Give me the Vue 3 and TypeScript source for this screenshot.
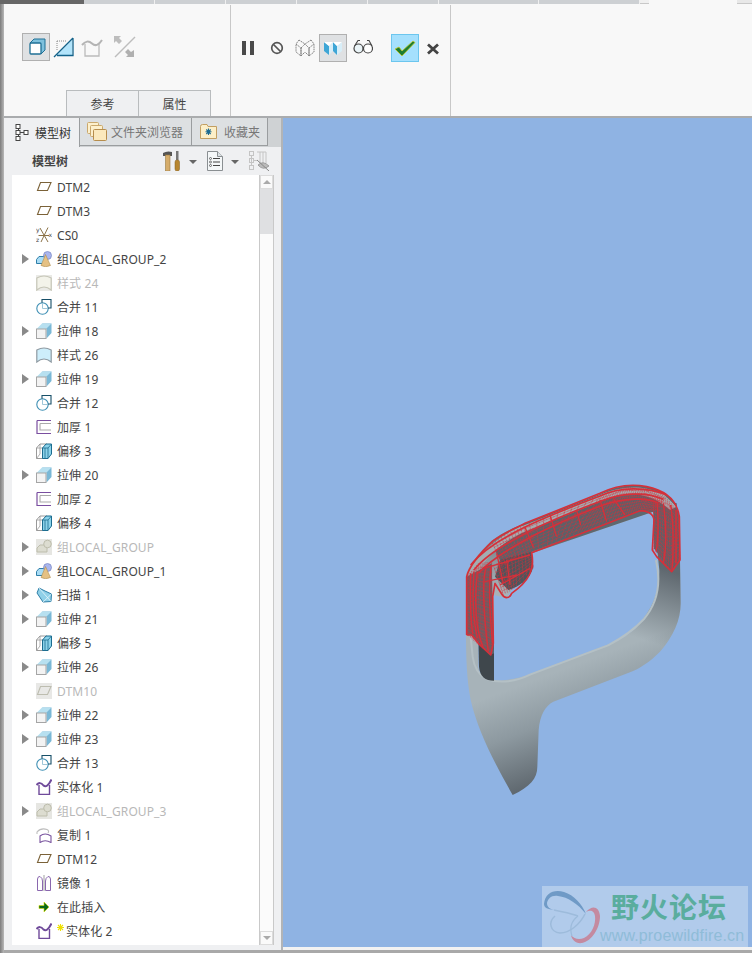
<script setup lang="ts">
interface Row { label: string; icon: string; arrow?: boolean; muted?: boolean; star?: boolean }
const rows: Row[] = [
  { label: 'DTM2', icon: 'plane' },
  { label: 'DTM3', icon: 'plane' },
  { label: 'CS0', icon: 'csys' },
  { label: '组LOCAL_GROUP_2', icon: 'group', arrow: true },
  { label: '样式 24', icon: 'style-off', muted: true },
  { label: '合并 11', icon: 'merge' },
  { label: '拉伸 18', icon: 'extrude', arrow: true },
  { label: '样式 26', icon: 'style' },
  { label: '拉伸 19', icon: 'extrude', arrow: true },
  { label: '合并 12', icon: 'merge' },
  { label: '加厚 1', icon: 'thick' },
  { label: '偏移 3', icon: 'offset' },
  { label: '拉伸 20', icon: 'extrude', arrow: true },
  { label: '加厚 2', icon: 'thick' },
  { label: '偏移 4', icon: 'offset' },
  { label: '组LOCAL_GROUP', icon: 'group-off', arrow: true, muted: true },
  { label: '组LOCAL_GROUP_1', icon: 'group', arrow: true },
  { label: '扫描 1', icon: 'sweep', arrow: true },
  { label: '拉伸 21', icon: 'extrude', arrow: true },
  { label: '偏移 5', icon: 'offset' },
  { label: '拉伸 26', icon: 'extrude', arrow: true },
  { label: 'DTM10', icon: 'plane-off', muted: true },
  { label: '拉伸 22', icon: 'extrude', arrow: true },
  { label: '拉伸 23', icon: 'extrude', arrow: true },
  { label: '合并 13', icon: 'merge' },
  { label: '实体化 1', icon: 'solid' },
  { label: '组LOCAL_GROUP_3', icon: 'group-off', arrow: true, muted: true },
  { label: '复制 1', icon: 'copy' },
  { label: 'DTM12', icon: 'plane' },
  { label: '镜像 1', icon: 'mirror' },
  { label: '在此插入', icon: 'insert' },
  { label: '实体化 2', icon: 'solid', star: true },
]

const segs = [71, 71, 71, 71, 71, 100, 101]

type Pt = [number, number]
function lerp(a: number, b: number, t: number) { return a + (b - a) * t }
function at(edge: Pt[], t: number): Pt {
  const f = t * (edge.length - 1)
  const i = Math.min(Math.floor(f), edge.length - 2)
  return [lerp(edge[i][0], edge[i + 1][0], f - i), lerp(edge[i][1], edge[i + 1][1], f - i)]
}
// A hatch between two edges: `across` lines from edge to edge, `along` lines following them.
function grid(a: Pt[], b: Pt[], across: number, along: number): string {
  let d = ''
  for (let i = 0; i <= across; i++) {
    const p = at(a, i / across)
    const q = at(b, i / across)
    d += `M${p[0].toFixed(1)} ${p[1].toFixed(1)}L${q[0].toFixed(1)} ${q[1].toFixed(1)}`
  }
  for (let j = 1; j < along; j++) {
    const s = j / along
    for (let i = 0; i <= 40; i++) {
      const p = at(a, i / 40)
      const q = at(b, i / 40)
      d += `${i ? 'L' : 'M'}${lerp(p[0], q[0], s).toFixed(1)} ${lerp(p[1], q[1], s).toFixed(1)}`
    }
  }
  return d
}
const topOuter: Pt[] = [[125, 215], [225, 165], [450, 75], [525, 50], [590, 55], [650, 80]]
const topInner: Pt[] = [[160, 290], [245, 245], [380, 192], [490, 150], [570, 122], [610, 125]]
const band = grid(topOuter, topInner, 52, 9)
const leftP = grid([[50, 320], [85, 280], [125, 275]], [[52, 495], [85, 525], [125, 555]], 14, 18)
const rightP = grid([[610, 85], [650, 85], [685, 125]], [[612, 240], [660, 300], [690, 270]], 13, 15)
const lobe = grid([[130, 285], [190, 255], [245, 245]], [[160, 375], [195, 355], [250, 295]], 11, 8)
</script>

<template>
  <div class="app">
    <svg class="defs" width="0" height="0" aria-hidden="true">
      <defs>
        <symbol id="plane" viewBox="0 0 16 16"><path d="M4.500 3.500H15L11.500 11.500H1.500Z" fill="none" stroke="#7b6238" stroke-width="1.100"/></symbol>
        <symbol id="plane-off" viewBox="0 0 16 16"><rect width="16" height="16" fill="#e8e8e6"/><path d="M4.500 3.500H15L11.500 11.500H1.500Z" fill="none" stroke="#bdbdb0" stroke-width="1.100"/></symbol>
        <symbol id="csys" viewBox="0 0 16 16"><path d="M4 1 12 15M12 .5 5 15M2.500 8.500H13" fill="none" stroke="#8b7146" stroke-width="1"/><g font-size="6" font-family="'DejaVu Sans', sans-serif" fill="#444"><text x="0" y="5">y</text><text x="0" y="15">z</text><text x="12.500" y="10">x</text></g></symbol>
        <symbol id="group" viewBox="0 0 16 16"><path d="M.5 8.500 3 5.500H10V12.500H.5Z" fill="#a9dcf5" stroke="#2f7fa8"/><circle cx="11.500" cy="4.500" r="4" fill="#aab6ee" stroke="#6a78b8" stroke-width=".6"/><path d="M9.500 3.500 14.500 14.500Q9.500 17 5 14.500Z" fill="#e5c184" stroke="#a58243" stroke-width=".5"/></symbol>
        <symbol id="group-off" viewBox="0 0 16 16"><rect width="16" height="16" fill="#e6e6e2"/><path d="M1 9 4 6H11V13H1Z" fill="#dcdcd0" stroke="#bdbdac"/><circle cx="11.500" cy="5" r="3.800" fill="#dcdcd0" stroke="#bdbdac"/></symbol>
        <symbol id="style" viewBox="0 0 16 16"><path d="M.8 3Q8 -1 15.200 3V15Q8 9 .8 15Z" fill="#cdeefb" stroke="#8f9aa2" stroke-width="1.200"/></symbol>
        <symbol id="style-off" viewBox="0 0 16 16"><rect width="16" height="16" fill="#eaeae6"/><path d="M.8 3Q8 -1 15.200 3V15Q8 9 .8 15Z" fill="#f3f3ea" stroke="#c6c6b8" stroke-width="1.200"/></symbol>
        <symbol id="merge" viewBox="0 0 16 16"><circle cx="6.500" cy="9.500" r="5.700" fill="#fff" stroke="#3e8fb4" stroke-width="1.100"/><path d="M6.500 3.800V9.500H12" fill="none" stroke="#9fc6d8"/><path d="M6 3.800V.5H15V9H12" fill="none" stroke="#174f68" stroke-width="1.100"/></symbol>
        <symbol id="extrude" viewBox="0 0 16 16"><path d="M6 .5H15.500V10L10.500 15.500V6Z" fill="#7ab8d6"/><path d="M.5 6 6 .5H15.500L10 6Z" fill="#b7e0f0"/><rect x=".5" y="6" width="9.500" height="9.500" fill="#f3f3f3" stroke="#a5a5a5"/></symbol>
        <symbol id="thick" viewBox="0 0 16 16"><path d="M4 4.500H15M4 4.500V11H15" fill="none" stroke="#aaa" stroke-width="1.100"/><path d="M1 1.500H15M1 1.500V14.500H15" fill="none" stroke="#7a4ea0" stroke-width="1.200"/></symbol>
        <symbol id="offset" viewBox="0 0 16 16"><path d="M.5 5 4 1H11V15.500H.5Z" fill="#fff" stroke="#999"/><path d="M4 1V11L.5 15.500M.5 5H7" fill="none" stroke="#999" stroke-width=".8"/><path d="M6.500 5 10 1H15.500V11L12 15.500H6.500Z" fill="#8bd2ea" stroke="#1c6d90"/><path d="M6.500 5H12V15.500M12 5 15.500 1M9 5V15" fill="none" stroke="#1c6d90" stroke-width=".8"/></symbol>
        <symbol id="sweep" viewBox="0 0 16 16"><path d="M3 1 9 4 15.500 7 15 14.500 7 15 1 6Z" fill="#8fd0e8" stroke="#2f7fa8"/><path d="M3 1 15 14.500M15.500 7 7 15" fill="none" stroke="#e8f6fb" stroke-width=".8"/></symbol>
        <symbol id="solid" viewBox="0 0 16 16"><path d="M3 6V15.500H13.500V6" fill="#fff" stroke="#6f4a9a" stroke-width="1.400"/><path d="M.5 6Q4 2 7.500 6.500Q11 9.500 15.500 .5" fill="none" stroke="#6f4a9a" stroke-width="2"/></symbol>
        <symbol id="copy" viewBox="0 0 16 16"><path d="M1 7V5Q5 .5 11 2.500Q13.500 3.500 12 6" fill="none" stroke="#bdbdbd" stroke-width="1.100"/><path d="M4 9Q9 5 15 9V15.500Q9 12 4 15.500Z" fill="#fff" stroke="#7a559f" stroke-width="1.100"/></symbol>
        <symbol id="mirror" viewBox="0 0 16 16"><path d="M1.500 15.500V4Q2 1 4 1.500Q6.500 3 6.500 6V15.500ZM14.500 15.500V4Q14 1 12 1.500Q9.500 3 9.500 6V15.500Z" fill="none" stroke="#8a67ae"/><path d="M8 0V16" stroke="#888" stroke-width=".8"/></symbol>
        <symbol id="insert" viewBox="0 0 16 16"><path d="M3 6.500H8V3L13 8 8 13V9.500H3Z" fill="#0c6a1a" stroke="#d6dc00" stroke-width=".6"/></symbol>
      </defs>
    </svg>

    <div class="strip">
      <div class="strip-dark"></div>
      <div v-for="(w, i) in segs" :key="i" class="strip-seg" :style="{ width: w + 'px' }"></div>
      <div class="strip-low"></div>
      <div class="strip-gap"></div>
      <div class="strip-low end"></div>
    </div>

    <header class="ribbon">
      <section class="group-a">
        <div class="tools">
          <span class="btn on">
            <svg width="22" height="22" viewBox="0 0 22 22"><path d="M5 7 9 3H20V14L16 18Z" fill="#7ec1dd" stroke="#1f7096"/><rect x="5" y="7" width="11" height="11" rx="1" fill="#fff" stroke="#1f7096" stroke-width="1.300"/></svg>
          </span>
          <span class="btn">
            <svg width="22" height="22" viewBox="0 0 22 22"><path d="M4 19 19 4V19Z" fill="#b2e4fb"/><path d="M4 5H13M4 5V15" fill="none" stroke="#888" stroke-dasharray="1 1"/><path d="M1 21 20 2M20 2V19.500H4" fill="none" stroke="#12628a" stroke-width="1.300"/></svg>
          </span>
          <span class="btn">
            <svg width="22" height="22" viewBox="0 0 22 22"><path d="M4 8V20H18V8" fill="none" stroke="#bbb" stroke-width="1.300"/><path d="M1 9Q6 3 11 7.500T21 4" fill="none" stroke="#b4b4b4" stroke-width="2"/></svg>
          </span>
          <span class="btn last">
            <svg width="24" height="24" viewBox="0 0 24 24"><path d="M3 22 23 2" stroke="#bdbdbd" stroke-width="1.500"/><path d="M2 1H9L7 3 10 6 7 9 4 6 2 8Z" fill="#bdbdbd"/><path d="M22 22H14L16 20 13 17 16 14 19 17 22 15Z" fill="#b0b0b0"/></svg>
          </span>
        </div>
        <div class="sub-tabs">
          <span class="sub-tab">参考</span>
          <span class="sub-tab">属性</span>
        </div>
      </section>
      <section class="group-b">
        <div class="pause"><i></i><i></i></div>
        <svg class="stop" width="16" height="16" viewBox="0 0 16 16"><circle cx="8" cy="8" r="5.300" fill="none" stroke="#555" stroke-width="1.700"/><path d="M4.500 4.500 11.500 11.500" stroke="#555" stroke-width="1.700"/></svg>
        <svg class="mesh-ico" width="20" height="18" viewBox="0 0 20 18"><path d="M1 5 6 9V17L1 13ZM6 9 10 5 14 9V17L10 13 6 17ZM14 9 19 5V13L14 17ZM4 1 1 5M16 1 19 5M4 1 10 5 16 1" fill="none" stroke="#666" stroke-width=".8" stroke-dasharray="1.500 .7"/></svg>
        <span class="btn on small">
          <svg width="20" height="18" viewBox="0 0 20 18"><path d="M1 3 6 7V16L1 12Z" fill="#3ea6d6"/><path d="M6 7 10 3V12L6 16Z" fill="#d7eef8"/><path d="M10 3 14 7V16L10 12Z" fill="#3ea6d6"/><path d="M14 7 19 3V12L14 16Z" fill="#d7eef8"/><path d="M1 3H10L6 7ZM10 3H19L14 7Z" fill="#fff"/></svg>
        </span>
        <svg class="glasses" width="20" height="16" viewBox="0 0 20 16"><circle cx="5.500" cy="9.500" r="4.500" fill="#eaf4f7" stroke="#444" stroke-width="1.200"/><circle cx="15" cy="9.500" r="4.500" fill="#fff" stroke="#444" stroke-width="1.200"/><path d="M10 8.500H10.500M1.500 7 5 1.500H7M19 7 16 1.500H14" fill="none" stroke="#444" stroke-width="1.100"/></svg>
        <span class="ok">
          <svg width="22" height="17" viewBox="0 0 22 17"><path d="M1 9 5 7 8 11 19 1 21 2.500 8 16Z" fill="#1d7d30" stroke="#c9c82a" stroke-width=".8"/></svg>
        </span>
        <svg class="cancel" width="14" height="12" viewBox="0 0 14 12"><path d="M2 1.500 12 10.500M12 1.500 2 10.500" stroke="#444" stroke-width="2.800"/></svg>
      </section>
    </header>

    <main class="work">
      <aside class="panel">
        <nav class="tabs">
          <span class="tab active">
            <svg width="14" height="17" viewBox="0 0 14 17"><path d="M3.500 5V12.500M3.500 8.500H9.500" stroke="#444" fill="none"/><rect x="1" y=".5" width="4" height="4" fill="#fff" stroke="#444"/><rect x="1" y="6.500" width="4" height="4" fill="#fff" stroke="#444"/><rect x="1" y="12.500" width="4" height="4" fill="#fff" stroke="#444"/><rect x="9" y="6.500" width="4" height="4" fill="#fff" stroke="#444"/></svg>
            模型树
          </span>
          <span class="tab t2">
            <svg width="20" height="19" viewBox="0 0 20 19"><rect x=".5" y=".5" width="11" height="11" rx="1" fill="#fdf0cc" stroke="#caa86c"/><rect x="3.500" y="3.500" width="12" height="11" rx="1" fill="#fdf0cc" stroke="#caa86c"/><rect x="6.500" y="7.500" width="13" height="11" rx="1" fill="#fbe9bd" stroke="#b68d4d"/></svg>
            文件夹浏览器
          </span>
          <span class="tab t3">
            <svg width="17" height="15" viewBox="0 0 17 15"><path d="M.5 2.500Q.5 .5 2.500 .5H7L8 2.500H16.500V14.500H.5Z" fill="#fcefc8" stroke="#c29f62"/><path d="M8.500 4.500V11M5.500 7.800H11.500M6.300 5.500 10.700 10M10.700 5.500 6.300 10" stroke="#1d6c92" stroke-width="1.100"/></svg>
            收藏夹
          </span>
        </nav>
        <div class="panel-head">
          <strong>模型树</strong>
          <div class="head-tools">
            <svg width="18" height="20" viewBox="0 0 18 20"><path d="M0 2Q4 -.5 9 1V5H0Z" fill="#555"/><rect x="2.500" y="4" width="4.500" height="16" fill="#d6ad6b" stroke="#9a7a42" stroke-width=".6"/><rect x="13" y="0" width="2.500" height="9" fill="#777"/><rect x="12" y="9" width="4.500" height="11" rx="2" fill="#b8862f" stroke="#805c1c" stroke-width=".5"/></svg>
            <i class="caret"></i>
            <svg class="doc" width="16" height="20" viewBox="0 0 16 20"><path d="M.5 .5H10.500L15.500 5.500V19.500H.5Z" fill="#f4f7f8" stroke="#8a8f92"/><path d="M10.500 .5V5.500H15.500" fill="#dde3e6" stroke="#8a8f92"/><path d="M6 7.500H13M6 11H13M6 14.500H13" stroke="#444"/><circle cx="3.500" cy="7.500" r="1" fill="none" stroke="#444" stroke-width=".7"/><circle cx="3.500" cy="11" r="1" fill="none" stroke="#444" stroke-width=".7"/><circle cx="3.500" cy="14.500" r="1" fill="none" stroke="#444" stroke-width=".7"/></svg>
            <i class="caret"></i>
            <svg class="hide-ico" width="21" height="20" viewBox="0 0 21 20"><g fill="none" stroke="#c4c4c4"><rect x=".5" y=".5" width="4" height="4"/><rect x=".5" y="7.500" width="4" height="4"/><rect x=".5" y="14.500" width="4" height="4"/><path d="M2.500 4.500V14.500M4.500 9.500H8M8 1H17V12M11 1V12M14 1V12"/></g><path d="M9 14Q14 9 20 15Q14 20 9 14Z" fill="#bbb" stroke="#888" stroke-width=".7"/><path d="M8 9 20 20" stroke="#888"/></svg>
          </div>
        </div>
        <div class="tree">
          <ul class="rows">
            <li v-for="r in rows" :key="r.label" class="row" :class="{ muted: r.muted }">
              <i class="arrow" :class="{ hidden: !r.arrow }"></i>
              <svg class="ico" width="16" height="16"><use :href="'#' + r.icon" /></svg>
              <svg v-if="r.star" class="star" width="7" height="7" viewBox="0 0 7 7"><path d="M3.500 0V7M0 3.500H7M1 1 6 6M6 1 1 6" stroke="#eee000" stroke-width="1.100"/></svg>
              <span class="label">{{ r.label }}</span>
            </li>
          </ul>
          <div class="scroll">
            <span class="sbtn"><i class="up"></i></span>
            <span class="thumb"></span>
            <span class="track"></span>
            <span class="sbtn"><i class="down"></i></span>
          </div>
        </div>
      </aside>

      <section class="view">
        <svg class="part" width="250" height="340" viewBox="0 0 750 1020">
          <defs>
            <linearGradient id="body" gradientUnits="userSpaceOnUse" x1="120" y1="680" x2="225" y2="960">
              <stop offset="0" stop-color="#a7b3b9"/>
              <stop offset=".45" stop-color="#8d99a0"/>
              <stop offset="1" stop-color="#5f686f"/>
            </linearGradient>
            <linearGradient id="shade" gradientUnits="userSpaceOnUse" x1="610" y1="520" x2="680" y2="310">
              <stop offset="0" stop-color="#5f686f" stop-opacity="0"/>
              <stop offset="1" stop-color="#5f686f"/>
            </linearGradient>
            <path id="shape" fill-rule="evenodd" d="M188 975C140 890 85 790 62 690C50 630 48 560 48 490L48 320C50 290 90 245 125 212C160 185 200 170 225 160L450 72C490 52 540 38 590 50C640 60 680 85 688 140L692 400C692 450 670 500 630 545C600 575 570 595 540 607L310 695C285 708 270 735 266 780L262 890C262 925 240 950 188 975ZM132 632C105 632 88 615 85 590L85 500L132 510ZM132 632L132 375L170 385L245 250L610 125L628 300C630 360 610 415 560 470C530 500 500 515 470 525L240 612C210 625 170 632 132 632Z"/>
          </defs>
          <use href="#shape" fill="url(#body)"/>
          <use href="#shape" fill="url(#shade)"/>
          <path fill="none" stroke="#b4c0c5" stroke-width="6" d="M618 270C634 340 622 400 582 447C540 492 500 512 472 527L240 614C200 634 150 642 110 627C85 614 72 592 68 560L62 500"/>
          <path fill="#3f474c" d="M85 500L132 520V632C105 632 90 620 87 590Z"/>
          <path fill="#59636a" d="M160 290 245 245 380 192 490 150 570 122 610 125 612 70 450 88 225 172 130 230Z"/>
          <path fill="#4d565c" d="M175 360C205 350 240 330 250 290L245 245L150 270L135 320Z"/>
          <path fill="#5c666c" d="M50 320 125 280 132 550 120 555 65 495 50 495Z"/>
          <path fill="#59636a" d="M610 80 680 100 690 270 665 305 612 235Z"/>
          <path fill="#a3adb2" d="M55 305C90 250 150 190 225 165L450 75C510 50 570 42 640 72L680 110 660 120C600 65 530 60 450 95L225 185C170 210 120 250 85 300Z"/>
          <g fill="none" stroke="#d5303a" stroke-linejoin="round">
            <path stroke-width="2" stroke-dasharray="3 1.500" :d="band"/>
            <path stroke-width="2" stroke-dasharray="3 1.500" :d="leftP"/>
            <path stroke-width="2" stroke-dasharray="3 1.500" :d="rightP"/>
            <path stroke-width="2" stroke-dasharray="3 1.500" :d="lobe"/>
            <path stroke-width="5" d="M50 495V320C60 280 100 240 130 212C170 185 200 172 225 160L450 70C490 50 540 40 590 50C640 60 680 85 688 140L690 270L665 305L620 260L607 240L612 150C610 130 590 122 570 122L245 248C255 300 235 335 185 370C180 385 165 388 155 372L135 340L128 380L130 520L122 555L85 520L65 495L50 495"/>
            <path stroke-width="5" d="M62 285C130 200 300 135 450 78C510 50 590 50 650 75M72 300C130 225 300 150 455 92C520 68 590 65 640 88M85 310C150 240 300 165 460 105C520 85 590 80 625 100"/>
            <path stroke-width="4.500" d="M62 310C60 360 60 430 68 492M72 305C66 380 70 450 82 505M82 305C72 400 78 480 100 535M108 295C98 320 98 420 115 545M125 285C115 330 118 420 128 520M622 100C626 170 626 210 618 245M640 100C650 170 650 230 640 280M662 105C672 170 672 220 666 300M678 120V280"/>
            <path stroke-width="4" d="M170 270 180 345M140 250 160 340M225 172 250 232M300 135 320 200M380 122 392 165M490 85 525 135M450 90 470 155M100 295 240 255M105 335 200 315M150 345 240 295"/>
          </g>
        </svg>

        <div class="mark">
          <svg class="butterfly" width="62" height="60" viewBox="0 0 62 60">
            <path d="M2 18C3 7 12 3 22 6C32 9 40 18 44 28C36 18 26 11 16 10C9 9 6 13 5 17C5 21 8 23 12 24C6 23 2 22 2 18Z" fill="#6f9ac6"/>
            <path d="M12 24C20 26 28 27 36 30M13 30C6 36 8 46 18 47C28 47 38 38 43 28" fill="none" stroke="#9dbbdb" stroke-width="1.500"/>
            <path d="M44 26C50 19 57 20 58 30C58 42 50 55 40 57C34 58 30 54 29 49C32 53 37 54 42 52C50 48 54 38 53 30C52 24 48 24 44 26Z" fill="#c48aa0"/>
            <path d="M36 30C28 36 28 44 30 50" fill="none" stroke="#9dbbdb" stroke-width="1.200"/>
          </svg>
          <span class="cn">野火论坛</span>
          <span class="url">www.proewildfire.cn</span>
        </div>
      </section>
    </main>
  </div>
</template>

<style scoped>
.app { width: 752px; height: 953px; overflow: hidden; background: linear-gradient(90deg, #7c7c7c, #b8b8b8) no-repeat 0 0 / 4px 100%, #f8f8f8; font-family: "Noto Sans", "Noto Sans CJK SC", sans-serif; font-size: 12px; color: #444; display: flex; flex-direction: column; }
.defs { position: absolute; }
.strip { height: 4px; display: flex; flex: none; background: #f8f8f8; }
.strip-dark { width: 84px; background: #676767; }
.strip-seg { background: #cdd0d3; border-right: 1px solid #f0f0f0; box-sizing: border-box; }
.strip-low { width: 9px; height: 4px; border-bottom: 1px solid #c8c8c8; box-sizing: border-box; background: #f0f0f0; }
.strip-gap { width: 88px; }
.strip-low.end { width: 15px; background: #e8e8e8; }

.ribbon { height: 112px; flex: none; display: flex; margin-left: 4px; background: #f8f8f8; }
.group-a { width: 227px; border-right: 1px solid #c8c8c8; display: flex; flex-direction: column; justify-content: space-between; margin-top: 1px; box-sizing: border-box; }
.tools { display: flex; margin: 28px 0 0 18px; align-items: center; }
.btn { width: 28px; height: 28px; display: flex; align-items: center; justify-content: center; box-sizing: border-box; border: 1px solid transparent; flex: none; }
.btn + .btn { margin-left: 0; }
.btn.last { margin-left: 4px; }
.btn.on { background: #dfe1e3; border-color: #b0b0b0; }
.btn.small { margin: 0 6px 0 4px; }
.sub-tabs { display: flex; margin-left: 62px; }
.sub-tab { width: 73px; height: 26px; box-sizing: border-box; border: 1px solid #b9bcbe; border-bottom: none; background: #eff0f2; display: flex; align-items: center; justify-content: center; }
.sub-tab + .sub-tab { margin-left: -1px; }
.group-b { width: 220px; border-right: 1px solid #c8c8c8; display: flex; align-items: flex-start; padding: 29px 0 0 11px; box-sizing: border-box; margin-top: 1px; }
.pause { display: flex; gap: 4px; margin: 7px 15px 0 0; }
.pause i { width: 4px; height: 14px; background: #4a4a4a; display: block; }
.stop { margin: 6px 10px 0 0; }
.mesh-ico { margin: 5px 0 0 0; }
.glasses { margin: 5px 18px 0 0; }
.ok { width: 28px; height: 28px; box-sizing: border-box; background: #a5e0fd; border: 1px solid #6cc6ee; display: flex; align-items: center; justify-content: center; margin-right: 7px; flex: none; }
.cancel { margin-top: 9px; }

.work { flex: 1; min-height: 0; display: flex; margin-left: 4px; border-top: 2px solid #aaacae; border-bottom: 3px solid #a9a9a9; background: #f2f2f2; position: relative; }
.panel { width: 277px; flex: none; background: #eff0f2; display: flex; flex-direction: column; border-right: 2px solid #b2b4b6; }
.tabs { display: flex; height: 29px; flex: none; background: #cfd2d4; }
.tab { display: flex; align-items: center; gap: 5px; box-sizing: border-box; height: 28px; padding-left: 8px; border-right: 1px solid #9a9d9f; border-bottom: 1px solid #9a9d9f; color: #777; background: #dde0e2; }
.tab.active { width: 76px; height: 29px; background: #eff0f2; border-bottom: none; color: #333; padding-left: 11px; gap: 6px; }
.t2 { width: 112px; padding-left: 7px; gap: 4px; }
.t3 { width: 76px; padding-left: 8px; gap: 7px; }
.panel-head { height: 28px; flex: none; display: flex; align-items: center; padding-left: 28px; }
.panel-head strong { font-size: 12px; font-weight: 700; color: #444; width: 131px; margin-top: -1px; }
.head-tools { display: flex; align-items: center; }
.caret { width: 0; height: 0; border: 4px solid transparent; border-top: 4px solid #666; border-bottom: 0; margin: 1px 10px 0 8px; }
.doc { margin-left: 0; }
.tree { flex: 1; min-height: 0; margin: 0 7px 5px 8px; background: #fff; display: flex; }
.rows { list-style: none; flex: 1; margin: 0; padding: 0; overflow: hidden; }
.row { height: 24px; display: flex; align-items: center; padding-left: 10px; white-space: nowrap; }
.row.muted .label { color: #b8b8b8; }
.arrow { width: 0; height: 0; border-left: 7px solid #8a8a8a; border-top: 5px solid transparent; border-bottom: 5px solid transparent; margin-right: 7px; }
.arrow.hidden { visibility: hidden; }
.ico { flex: none; margin-right: 5px; }
.star { flex: none; margin: -8px 2px 0 0; }
.label { letter-spacing: .1px; }
.scroll { width: 13px; flex: none; display: flex; flex-direction: column; border-left: 1px solid #c9c9c9; border-right: 1px solid #c9c9c9; }
.sbtn { height: 14px; background: #fafafa; border: 1px solid #dcdcdc; display: flex; align-items: center; justify-content: center; box-sizing: border-box; flex: none; }
.sbtn i { width: 0; height: 0; border-left: 4px solid transparent; border-right: 4px solid transparent; display: block; }
.sbtn .up { border-bottom: 4px solid #aaa; }
.sbtn .down { border-top: 4px solid #aaa; }
.thumb { height: 45px; background: #dfe0e2; flex: none; }
.track { flex: 1; background: #fbfbfb; }

.view { flex: 1; min-width: 0; position: relative; background: #8fb3e3; border-bottom: 3px solid #f2f2f2; overflow: hidden; }
.part { position: absolute; left: 167px; top: 352px; }
.mark { position: absolute; right: 4px; bottom: 0; width: 206px; height: 61px; background: rgba(200, 218, 240, .6); }
.butterfly { position: absolute; left: 0; top: 0; }
.cn { position: absolute; left: 69px; top: 1px; font-family: "Noto Sans CJK SC", sans-serif; font-weight: 700; font-size: 28px; line-height: 38px; letter-spacing: 1px; color: #5aad9e; white-space: nowrap; }
.url { position: absolute; left: 58px; top: 40px; font-family: "Liberation Sans", sans-serif; font-size: 16px; letter-spacing: .15px; line-height: 20px; color: #8fbcd8; white-space: nowrap; }
</style>
